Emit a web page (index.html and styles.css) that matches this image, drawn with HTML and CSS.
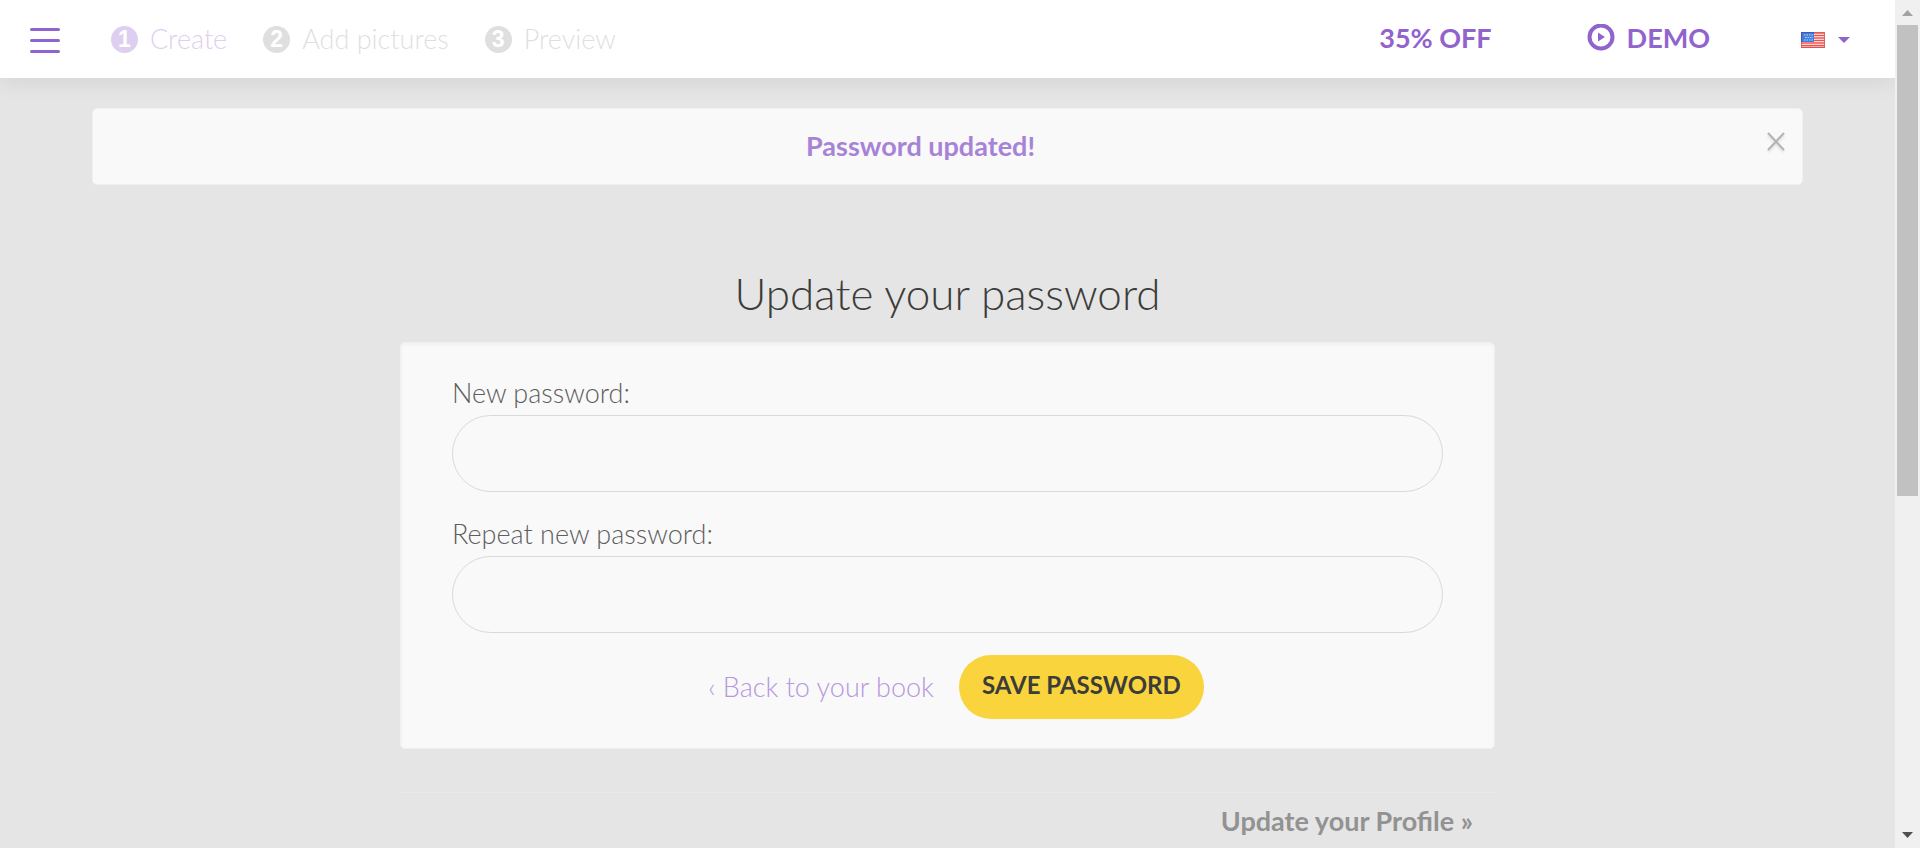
FILE: index.html
```html
<!DOCTYPE html>
<html lang="en">
<head>
<meta charset="utf-8">
<title>Update your password</title>
<link rel="stylesheet" href="styles.css">
</head>
<body>
<div class="window">
  <div class="page">
    <header class="topbar">
      <button class="menu" type="button" aria-label="Menu"><span></span><span></span><span></span></button>
      <nav class="steps">
        <a class="step step-active" href="#create"><span class="badge">1</span>Create</a>
        <a class="step" href="#pictures"><span class="badge">2</span>Add pictures</a>
        <a class="step" href="#preview"><span class="badge">3</span>Preview</a>
      </nav>
      <nav class="actions">
        <a class="action" href="#offer">35% OFF</a>
        <a class="action" href="#demo">
          <svg class="play" viewBox="0 0 28 28" aria-hidden="true"><circle cx="14" cy="13" r="11.500" fill="none" stroke="currentColor" stroke-width="4"/><path d="M11 8.500l7 4.500-7 4.500z" fill="currentColor"/></svg>DEMO</a>
        <button class="language" type="button" aria-label="Language">
          <svg class="flag" viewBox="0 0 24 16" aria-hidden="true">
            <rect width="24" height="16" fill="#fff"/>
            <path d="M0 1h24M0 3.500h24M0 6h24M0 8.500h24M0 11h24M0 13.500h24M0 15.500h24" stroke="#f0504c" stroke-width="1.500"/>
            <rect width="13" height="10" fill="#3f7fdc"/>
            <path d="M3 3h9M4 5.500h8M3 8h9" stroke="#bcd7fa" stroke-width="1.200" stroke-dasharray="1.500 1"/>
            <path d="M.5 10V.5H13" fill="none" stroke="#4a52b8"/>
            <path d="M13 .5h10.500v15H.5V10" fill="none" stroke="#cc5a55" stroke-opacity=".8"/>
          </svg>
          <svg class="caret" viewBox="0 0 12 6" aria-hidden="true"><path d="M0 0h12L6 6z" fill="currentColor"/></svg>
        </button>
      </nav>
    </header>
    <main class="content">
      <div class="alert" role="status">
        <span>Password updated!</span>
        <button class="close" type="button" aria-label="Close"><svg viewBox="0 0 20 22" aria-hidden="true"><path d="M2 2l16 17M18 2L2 19" fill="none" stroke="currentColor" stroke-width="2"/></svg></button>
      </div>
      <section class="account">
        <h1 class="title">Update your password</h1>
        <form class="card">
          <div class="field">
            <label for="new-password">New password:</label>
            <input id="new-password" type="password">
          </div>
          <div class="field">
            <label for="repeat-password">Repeat new password:</label>
            <input id="repeat-password" type="password">
          </div>
          <div class="buttons">
            <a class="back" href="#book">‹ Back to your book</a>
            <button class="save" type="submit">SAVE PASSWORD</button>
          </div>
        </form>
        <footer class="more"><a href="#profile">Update your Profile »</a></footer>
      </section>
    </main>
  </div>
  <div class="scrollbar" aria-hidden="true">
    <svg viewBox="0 0 25 25"><path d="M7 16h11l-5.500-6z" fill="#a3a3a3"/></svg>
    <div class="track"><div class="thumb"></div></div>
    <svg viewBox="0 0 25 25"><path d="M7 9h11l-5.500 6z" fill="#505050"/></svg>
  </div>
</div>
</body>
</html>
```
FILE: styles.css
```css
* { box-sizing: border-box; }
body { margin: 0; background: #e5e5e5; color: #3c3c3b; font: 300 27px/36px Lato, "Liberation Sans", sans-serif; }
a { color: inherit; text-decoration: none; }
button { border: 0; padding: 0; background: none; color: inherit; font: inherit; cursor: pointer; }
svg { display: block; }

.window { display: grid; grid-template-columns: minmax(0, 1fr) 25px; height: 100vh; }
.page { overflow: hidden; }

.topbar { display: flex; align-items: center; height: 78px; padding: 0 45px 0 30px; background: #fff; box-shadow: 0 4px 20px rgba(0, 0, 0, .08); }
.menu { display: flex; flex-direction: column; gap: 8px; width: 30px; margin-right: 51px; padding-top: 2px; }
.menu span { height: 3px; border-radius: 2px; background: #9163cd; }
.steps { display: flex; gap: 36px; }
.step { display: flex; align-items: center; gap: 12px; color: #dfdfdf; }
.step-active { color: #decff0; }
.badge { display: grid; place-items: center; width: 27px; height: 27px; border-radius: 50%; background: #dfdfdf; color: #fff; font: 700 23px/27px "Liberation Sans", sans-serif; }
.step-active .badge { background: #decff0; }
.actions { display: flex; align-items: center; margin-left: auto; gap: 95px; color: #9163cd; font-weight: 700; }
.action { display: flex; align-items: center; gap: 12px; padding-bottom: 2px; }
.play { width: 28px; height: 28px; }
.language { display: flex; align-items: center; gap: 13px; margin-left: -4px; padding-top: 2px; }
.flag { width: 24px; height: 16px; }
.caret { width: 12px; height: 6px; }

.content { padding: 30px 92px 0; }
.alert { position: relative; padding: 19px 114px 20px 60px; border: 1px solid #f0f0f0; border-radius: 5px; background: #f9f9f9; color: #a783d7; font-weight: 700; text-align: center; }
.close { position: absolute; top: 22px; right: 16px; color: #b3b3b3; filter: drop-shadow(0 2px 1px #ddd); }
.close svg { width: 20px; height: 22px; }

.account { width: 64%; margin: 0 auto; }
.title { margin: 75px 0 16px; font-size: 44px; line-height: 66px; font-weight: 300; text-align: center; }
.card { padding: 32px 51px 29px; border: 1px solid #f0f0f0; border-radius: 5px; background: #f9f9f9; box-shadow: inset 0 2px 3px #f0f0f0; }
.field { display: flex; flex-direction: column; gap: 4px; margin-bottom: 24px; color: #5e5e5e; }
.field input { width: 100%; height: 77px; padding: 0 30px; border: 1px solid #d9d9d9; border-radius: 39px; background: #f9f9f9; font: inherit; }
.buttons { display: flex; justify-content: center; align-items: center; gap: 25px; margin-top: -2px; padding-left: 17px; }
.back { color: #b797df; }
.save { padding: 12px 23px 16px; border-radius: 32px; background: #f9d43c; font-size: 24px; font-weight: 700; }
.more { margin-top: 43px; padding: 10px 22px; border-top: 1px solid #eaeaea; color: #929292; font-weight: 700; text-align: right; }

.scrollbar { display: flex; flex-direction: column; background: #f0f0f0; }
.scrollbar svg { width: 25px; height: 25px; }
.track { flex: 1; padding: 0 2px; }
.thumb { height: 59%; background: #c1c1c1; }
```
